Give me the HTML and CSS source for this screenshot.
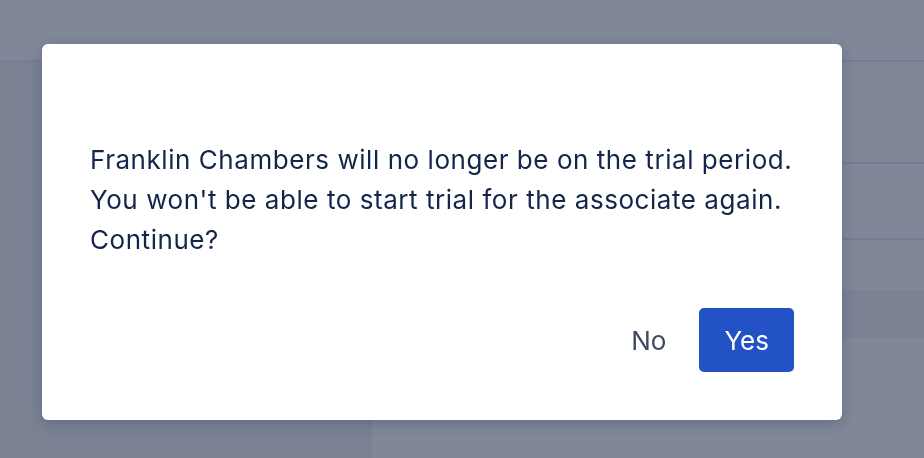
FILE: index.html
```html
<!DOCTYPE html>
<html lang="en">
<head>
    <meta charset="UTF-8">
    <meta name="viewport" content="width=device-width, initial-scale=1.0">
    <title>End Trial</title>
    <link rel="stylesheet" href="styles.css">
</head>
<body>
    <div class="page">
        <div class="page-header"></div>
        <div class="page-body">
            <div class="side-column"></div>
            <div class="main-column">
                <div class="row"></div>
                <div class="row row-short"></div>
                <div class="row-shaded"></div>
            </div>
        </div>
    </div>

    <div class="overlay">
        <div class="modal">
            <p class="modal-text">
                Franklin Chambers will no longer be on the trial period.<br>
                You won't be able to start trial for the associate again.<br>
                Continue?
            </p>
            <div class="modal-actions">
                <button class="btn btn-plain">No</button>
                <button class="btn btn-primary">Yes</button>
            </div>
        </div>
    </div>
</body>
</html>
```
FILE: styles.css
```css
body {
    margin: 0;
    font-family: Inter, "Noto Sans", Arial, sans-serif;
    background-color: #ffffff;
    overflow: hidden;
}

.page {
    width: 924px;
    height: 458px;
    display: flex;
    flex-direction: column;
}

.page-header {
    height: 60px;
    border-bottom: 2px solid #e6e9ef;
}

.page-body {
    flex: 1;
    display: flex;
}

.side-column {
    width: 372px;
    background-color: #f1f3f6;
}

.main-column {
    flex: 1;
    padding-top: 100px;
}

.row {
    height: 74px;
    border-top: 2px solid #dfe3ea;
}

.row-short {
    height: 50px;
}

.row-shaded {
    height: 48px;
    background-color: #f1f3f6;
}

.overlay {
    position: fixed;
    top: 0;
    left: 0;
    right: 0;
    bottom: 0;
    background-color: rgba(36, 48, 77, 0.58);
}

.modal {
    position: absolute;
    top: 44px;
    left: 42px;
    width: 800px;
    box-sizing: border-box;
    padding: 96px 48px 48px;
    background-color: #ffffff;
    border-radius: 6px;
    box-shadow: 0 4px 14px rgba(30, 40, 70, 0.25);
}

.modal-text {
    margin: 0;
    font-size: 26px;
    line-height: 40px;
    letter-spacing: 0.55px;
    color: #14254a;
}

.modal-actions {
    display: flex;
    justify-content: flex-end;
    gap: 8px;
    margin-top: 48px;
}

.btn {
    height: 64px;
    padding: 0 25px;
    border: none;
    border-radius: 5px;
    font-family: inherit;
    font-size: 26px;
    cursor: pointer;
}

.btn-plain {
    background: none;
    color: #3e4a63;
}

.btn-primary {
    background-color: #2352c6;
    color: #ffffff;
}
```
